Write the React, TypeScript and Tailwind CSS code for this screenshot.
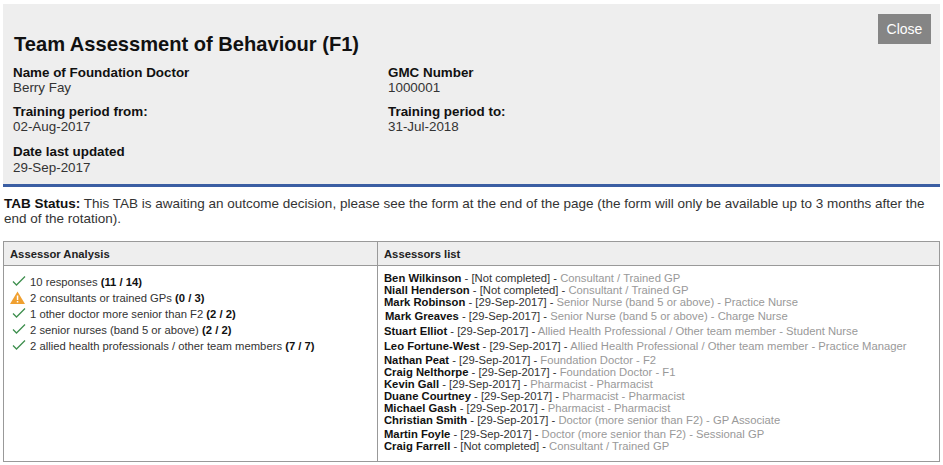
const assessors = [
  { name: 'Ben Wilkinson', date: '[Not completed]', role: 'Consultant / Trained GP', cls: 'h-3' },
  { name: 'Niall Henderson', date: '[Not completed]', role: 'Consultant / Trained GP', cls: 'h-3' },
  { name: 'Mark Robinson', date: '[29-Sep-2017]', role: 'Senior Nurse (band 5 or above) - Practice Nurse', cls: 'h-3' },
  { name: 'Mark Greaves', date: '[29-Sep-2017]', role: 'Senior Nurse (band 5 or above) - Charge Nurse', cls: 'h-3 mt-[2px] ml-px' },
  { name: 'Stuart Elliot', date: '[29-Sep-2017]', role: 'Allied Health Professional / Other team member - Student Nurse', cls: 'h-3 mt-[3px]' },
  { name: 'Leo Fortune-West', date: '[29-Sep-2017]', role: 'Allied Health Professional / Other team member - Practice Manager', cls: 'h-3 mt-[3px]' },
  { name: 'Nathan Peat', date: '[29-Sep-2017]', role: 'Foundation Doctor - F2', cls: 'h-3 mt-[2px]' },
  { name: 'Craig Nelthorpe', date: '[29-Sep-2017]', role: 'Foundation Doctor - F1', cls: 'h-3' },
  { name: 'Kevin Gall', date: '[29-Sep-2017]', role: 'Pharmacist - Pharmacist', cls: 'h-3' },
  { name: 'Duane Courtney', date: '[29-Sep-2017]', role: 'Pharmacist - Pharmacist', cls: 'h-3' },
  { name: 'Michael Gash', date: '[29-Sep-2017]', role: 'Pharmacist - Pharmacist', cls: 'h-3' },
  { name: 'Christian Smith', date: '[29-Sep-2017]', role: 'Doctor (more senior than F2) - GP Associate', cls: 'h-3' },
  { name: 'Martin Foyle', date: '[29-Sep-2017]', role: 'Doctor (more senior than F2) - Sessional GP', cls: 'h-3 mt-[2px]' },
  { name: 'Craig Farrell', date: '[Not completed]', role: 'Consultant / Trained GP', cls: 'h-3' },
];

const analysis = [
  { ok: true, text: '10 responses', count: '(11 / 14)' },
  { ok: false, text: '2 consultants or trained GPs', count: '(0 / 3)' },
  { ok: true, text: '1 other doctor more senior than F2', count: '(2 / 2)' },
  { ok: true, text: '2 senior nurses (band 5 or above)', count: '(2 / 2)' },
  { ok: true, text: '2 allied health professionals / other team members', count: '(7 / 7)' },
];

function Tick() {
  return (
    <svg className="w-[14px] h-[12px] ml-[2px] mt-[-3px]" viewBox="0 0 14 12" fill="none">
      <path d="M1 6.5 L4.5 10 L13 1.5" stroke="#3f8f4f" strokeWidth="1.3" />
    </svg>
  );
}

function Warning() {
  return (
    <svg className="w-[15px] h-[13px] mt-[-1px]" viewBox="0 0 15 13">
      <path d="M7.5 0.5 L15 13 L0 13 Z" fill="#f0a030" />
      <rect x="6.8" y="4.5" width="1.5" height="4.5" fill="#fff" />
      <rect x="6.8" y="10" width="1.5" height="1.5" fill="#fff" />
    </svg>
  );
}

function Field({ label, value, className = '' }: { label: string; value: string; className?: string }) {
  return (
    <div className={`h-[30px] ${className}`}>
      <div className="font-bold leading-[15px] text-[#111]">{label}</div>
      <div className="leading-[15px] text-[#333]">{value}</div>
    </div>
  );
}

export default function App() {
  return (
    <div className="w-[943px] h-[465px] overflow-hidden bg-white px-[3px] pt-1 text-[13.4px] text-[#222] font-['Liberation_Sans',Arial,sans-serif]">
      {/* header */}
      <div className="h-[183px] bg-[#eeeeee] border-b-[3px] border-[#3b5ea3] relative px-[10px] pt-[28px]">
        <button className="absolute right-[9px] top-[10px] w-[53px] h-[30px] bg-[#858585] text-white text-[14px]">
          Close
        </button>
        <h1 className="text-[20.1px] font-bold leading-[24px] text-[#111] ml-px">Team Assessment of Behaviour (F1)</h1>
        <div className="grid grid-cols-[375px_1fr] mt-[9px] gap-y-[9px]">
          <Field label="Name of Foundation Doctor" value="Berry Fay" />
          <Field label="GMC Number" value="1000001" />
          <Field label="Training period from:" value="02-Aug-2017" />
          <Field label="Training period to:" value="31-Jul-2018" />
          <div className="h-[31px] mt-px">
            <div className="font-bold leading-[16px] text-[#111]">Date last updated</div>
            <div className="leading-[15px] text-[#333]">29-Sep-2017</div>
          </div>
        </div>
      </div>

      {/* status */}
      <p className="mt-[9px] ml-px leading-[15px] text-[13.5px] text-[#333] w-[936px]">
        <b className="text-[#111]">TAB Status:</b> This TAB is awaiting an outcome decision, please see the form at the end of the page (the form will only be available up to 3 months after the end of the rotation).
      </p>

      {/* table */}
      <div className="mt-[15px] w-[937px] h-[221px] border border-[#999] grid grid-cols-[374px_1fr] grid-rows-[24px_1fr] text-[11.25px]">
        <div className="bg-[#eeeeee] border-b border-r border-[#999] px-[6px] font-bold leading-[24px] text-[#222]">Assessor Analysis</div>
        <div className="bg-[#eeeeee] border-b border-[#999] px-[6px] font-bold leading-[24px] text-[#222]">Assessors list</div>
        <div className="border-r border-[#999] pl-[6px] pt-[8px]">
          {analysis.map((row) => (
            <div key={row.text} className="flex items-center h-4 leading-4 text-[#333]">
              <div className="w-5 shrink-0">{row.ok ? <Tick /> : <Warning />}</div>
              <span>
                {row.text} <b className="text-[#111]">{row.count}</b>
              </span>
            </div>
          ))}
        </div>
        <div className="pl-[6px] pt-[6px]">
          {assessors.map((a) => (
            <div key={a.name} className={`${a.cls} leading-3 whitespace-nowrap text-[#333]`}>
              <b className="text-[#111]">{a.name}</b> - {a.date} - <span className="text-[#999]">{a.role}</span>
            </div>
          ))}
        </div>
      </div>
    </div>
  );
}
